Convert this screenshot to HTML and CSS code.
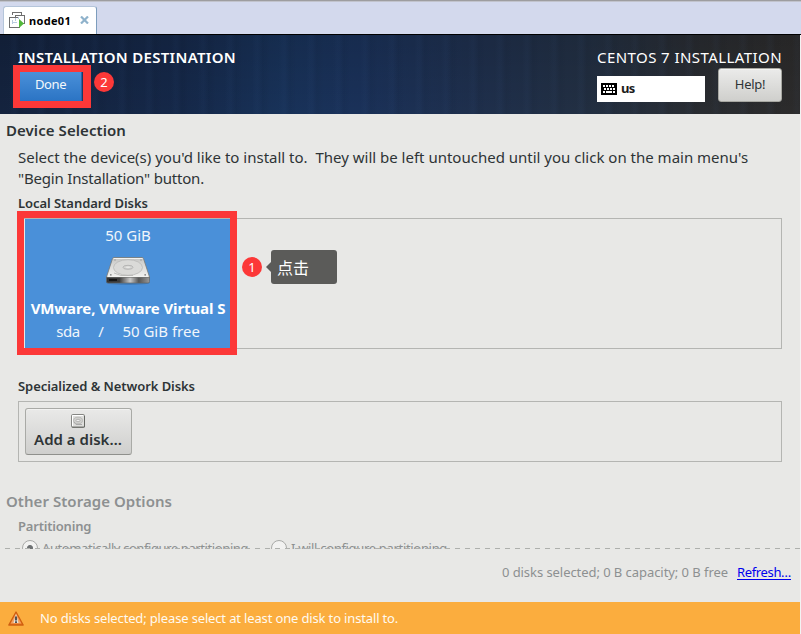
FILE: index.html
```
<!DOCTYPE html>
<html lang="en">
<head>
<meta charset="utf-8">
<title>node01</title>
<link rel="stylesheet" href="styles.css">
</head>
<body>
<div class="window">
  <nav class="tabs">
    <div class="tab">
      <svg class="tab-icon" width="17" height="17" viewBox="0 0 17 17" fill="none">
        <g stroke="#6f6f6f" shape-rendering="crispEdges">
          <path d="M3.5 3V.5h9V3.500"/>
          <path d="M6.500 6V3.500h9v8h-2"/>
          <path d="M9 5.500H.5v10h9.500v-2"/>
        </g>
        <path d="M3.500 7.500v4M3 10.500h5M6.500 6v2.500M9.500 5v2" stroke="#b9cbe0" shape-rendering="crispEdges"/>
        <path d="M10 7l5 4.500L10 16z" fill="#53b83b"/>
      </svg>
      <span class="tab-name">node01</span>
      <svg width="9" height="8" viewBox="0 0 9 8"><path d="M1 0.500l7 7M8 0.500l-7 7" stroke="#8fb2cb" stroke-width="2.200"/></svg>
    </div>
  </nav>

  <header class="header">
    <div class="header-left">
      <h1 class="page-title">INSTALLATION DESTINATION</h1>
      <button class="done">Done</button>
      <span class="badge badge-two">2</span>
    </div>
    <div class="header-right">
      <div class="product">CENTOS 7 INSTALLATION</div>
      <div class="tools">
        <div class="keyboard">
          <svg width="16" height="12" viewBox="0 0 16 12" shape-rendering="crispEdges">
            <rect width="16" height="12" fill="#000"/>
            <path d="M2 3h12M3 6h11" stroke="#fff" stroke-width="2" stroke-dasharray="2 1"/>
            <path d="M2 9h2M5 9h6M12 9h2" stroke="#fff" stroke-width="2"/>
          </svg>
          <span class="layout">us</span>
        </div>
        <button class="help">Help!</button>
      </div>
    </div>
  </header>

  <main class="content">
    <h2 class="section">Device Selection</h2>
    <p class="intro">Select the device(s) you'd like to install to.  They will be left untouched until you click on the main menu's
<span class="intro-end">"Begin Installation" button.</span></p>
    <h3 class="group">Local Standard Disks</h3>
    <div class="disks">
      <div class="disk">
        <span class="size">50 GiB</span>
        <svg class="disk-icon" width="46" height="30" viewBox="0 0 46 30">
          <defs>
            <linearGradient id="top" x1="0" y1="0" x2="0" y2="1"><stop offset="0" stop-color="#c4c4c2"/><stop offset=".5" stop-color="#dededc"/><stop offset="1" stop-color="#f1f1ef"/></linearGradient>
            <linearGradient id="front"><stop offset="0" stop-color="#333"/><stop offset=".3" stop-color="#3c3c3c"/><stop offset=".55" stop-color="#c9c9c9"/><stop offset=".75" stop-color="#555"/><stop offset="1" stop-color="#999"/></linearGradient>
          </defs>
          <ellipse cx="23" cy="26.500" rx="22" ry="2.500" fill="#174371" opacity=".25"/>
          <path d="M1.500 21l43 0v4.500q0 1.500-1.500 1.500H3q-1.500 0-1.500-1.500z" fill="url(#front)" stroke="#666" stroke-width=".7"/>
          <path d="M9 1.500h28q1 0 1.500 1L44.500 21h-43L7.500 2.500q.5-1 1.500-1z" fill="url(#top)" stroke="#777876" stroke-width=".8"/>
          <path d="M8.700 2.500h28.800M2.500 20.500h41" stroke="#f7f7f5" stroke-width=".9"/>
          <ellipse cx="23" cy="11.500" rx="14.500" ry="7.800" fill="#dadad8" stroke="#b9b9b7" stroke-width=".8"/>
          <ellipse cx="23" cy="11.300" rx="5" ry="2" fill="#d3d3d1" stroke="#a6a6a6" stroke-width=".7"/>
          <ellipse cx="23" cy="11.200" rx="2.500" ry=".8" fill="#e8e8e6"/>
          <path d="M9 17l7 2.500h12" fill="none" stroke="#b2b2b0" stroke-width=".8"/>
          <path d="M5 18.800h1.600M39.400 18.800H41M9.500 4h1M35.500 4h1" stroke="#777" stroke-width="1.200"/>
          <path d="M4 24h8" stroke="#151515" stroke-width="2"/>
        </svg>
        <strong class="model">VMware, VMware Virtual S</strong>
        <div class="details"><span class="device">sda</span><span>/</span><span>50 GiB free</span></div>
      </div>
      <div class="marker" aria-hidden="true"></div>
      <span class="badge badge-one">1</span>
      <div class="tip">点击</div>
    </div>

    <h3 class="group group-network">Specialized &amp; Network Disks</h3>
    <div class="network">
      <button class="add">
        <svg width="14" height="14" viewBox="0 0 14 14">
          <rect x=".5" y=".5" width="13" height="13" rx="1.200" fill="#dededc" stroke="#858683"/>
          <path d="M1.500 12V1.500H12" fill="none" stroke="#fff"/>
          <path d="M1 13h12.500V2" fill="none" stroke="#5d5f5b" stroke-width=".8"/>
          <ellipse cx="7" cy="6.500" rx="4.500" ry="3.300" fill="#cfcfcd" stroke="#b2b2b0" stroke-width=".8"/>
          <ellipse cx="7" cy="6.500" rx="2" ry="1.200" fill="#eee" stroke="#a0a09e" stroke-width=".7"/>
          <path d="M3 8l2 2.500h6" fill="none" stroke="#aaa"/>
        </svg>
        <span>Add a disk…</span>
      </button>
    </div>

    <h2 class="section section-other">Other Storage Options</h2>
    <h3 class="group group-partitioning">Partitioning</h3>
    <div class="choices">
      <label class="choice choice-auto"><i class="radio radio-on"></i><span>Automatically configure partitioning</span></label>
      <label class="choice choice-manual"><i class="radio"></i><span>I will configure partitioning</span></label>
      <svg class="cut" width="800" height="1"><path d="M5 .5h795" stroke="#aeb0ad" stroke-dasharray="5 5"/></svg>
    </div>
  </main>

  <div class="summary">
    <span class="totals">0 disks selected; 0 B capacity; 0 B free</span>
    <a class="refresh" href="#">Refresh…</a>
  </div>

  <footer class="warning">
    <svg width="16" height="15" viewBox="0 0 16 15">
      <path d="M8 1L15.200 14H.8z" fill="#e8731d" stroke="#cf5f10" stroke-width="1.300" stroke-linejoin="round"/>
      <path d="M8 2.500l5.300 10H2.700z" fill="#f3a465"/>
      <path d="M8 3l2.500 9h-5z" fill="#e5e5e0"/>
      <path d="M8 5.500v4M8 10.300v1.700" stroke="#222" stroke-width="1.500"/>
    </svg>
    <span class="message">No disks selected; please select at least one disk to install to.</span>
  </footer>
</div>
</body>
</html>
```
FILE: styles.css
```
* { box-sizing: border-box; }

body {
  margin: 0;
  background: #f3f3f3;
  font: 15px/20px "Noto Sans", "Noto Sans CJK SC", sans-serif;
  color: #2e3436;
}

h1, h2, h3, p { margin: 0; font-size: inherit; }
button { font: inherit; padding: 0; }
svg { display: block; flex: none; }

.window {
  width: 800px;
  height: 634px;
  display: flex;
  flex-direction: column;
  background: #e8e8e6;
}

.tabs {
  height: 35px;
  padding: 6px 3px 0;
  border-bottom: 1px solid #000;
  background: #d3d9ed;
  box-shadow: inset 0 1px #9d9d9f, inset 0 2px #c1c3cc;
  width: 801px;
}

.tab {
  width: 94px;
  height: 28px;
  padding-left: 6px;
  display: flex;
  align-items: center;
  background: #fff;
  border: 1px solid #b5c5da;
  border-right-color: #7d9dbd;
  border-bottom: 0;
  border-radius: 3px 3px 0 0;
}

.tab-icon { margin-left: -1px; }

.tab-name {
  width: 51px;
  margin-left: 3px;
  font-weight: 700;
  font-size: 11px;
  letter-spacing: .31px;
  color: #000;
}

.tab-name + svg { margin-top: -1px; }

.header {
  height: 79px;
  padding: 12px 18px 0;
  display: flex;
  justify-content: space-between;
  color: #fff;
  background:
    repeating-linear-gradient(90deg, rgba(70, 110, 170, 0) 0 9px, rgba(70, 110, 170, .04) 13px 15px, rgba(0, 0, 0, .04) 20px, rgba(70, 110, 170, 0) 27px),
    linear-gradient(180deg, rgba(0, 0, 0, .12), rgba(0, 0, 0, 0)),
    linear-gradient(90deg, #14233e 0, #152849 180px, #183259 280px, #1a3159 360px, #1e2f4d 470px, #222f42 590px, #292c31 700px, #2c2b2b 800px);
}

.header-left { position: relative; }

.page-title {
  font-weight: 600;
  letter-spacing: .3px;
}

.done {
  display: block;
  width: 78px;
  height: 43px;
  margin: -2px 0 0 -5px;
  padding: 0 2px 5px 0;
  border: 7px solid #fc3838;
  border-right-width: 8px;
  background: linear-gradient(#4a90d9, #2b74c4);
  box-shadow: inset -1px 0 #173a69, inset -2px 0 #2a63a5;
  color: #f4f8fc;
  font-size: 13px;
  line-height: 24px;
  letter-spacing: -.4px;
}

.badge {
  position: absolute;
  width: 20px;
  height: 20px;
  border-radius: 50%;
  background: #fc3838;
  color: #fff;
  font-size: 13px;
  line-height: 20px;
  text-align: center;
}

.badge-two { left: 76px; top: 25px; }
.badge-one { left: 223px; top: 38px; }

.header-right { width: 185px; }

.product {
  letter-spacing: .43px;
  white-space: nowrap;
}

.tools {
  margin-top: 1px;
  display: flex;
  justify-content: space-between;
}

.keyboard {
  width: 108px;
  height: 26px;
  margin-top: 8px;
  padding-left: 4px;
  display: flex;
  align-items: center;
  gap: 4px;
  background: #fff;
}

.layout {
  margin-top: -2px;
  color: #1c1c1c;
  font-weight: 700;
  font-size: 13px;
  letter-spacing: -.6px;
}

.help {
  width: 64px;
  height: 34px;
  padding-bottom: 2px;
  border: 1px solid #a8a8a2;
  border-radius: 3px;
  background: linear-gradient(#ebebea, #cfcfcc);
  box-shadow: inset 0 1px #f4f4f3;
  color: #2e3436;
  font-size: 13px;
  letter-spacing: -.3px;
  line-height: 28px;
}

.content {
  height: 435px;
  padding: 6px 18px 0;
  overflow: hidden;
}

.section {
  margin-left: -12px;
  font-weight: 600;
  letter-spacing: .07px;
}

.intro {
  margin-top: 7px;
  line-height: 21px;
  white-space: pre;
}

.intro-end { letter-spacing: -.19px; }

.group {
  margin-top: 4px;
  font-weight: 600;
  font-size: 13px;
  letter-spacing: -.05px;
}

.disks {
  position: relative;
  height: 131px;
  margin-top: 5px;
  padding-left: 6px;
  border: 1px solid #b4b5b2;
}

.disk {
  width: 206px;
  height: 129px;
  padding-top: 6px;
  display: flex;
  flex-direction: column;
  align-items: center;
  background: #4a90d9;
  color: #f1f6fb;
}

.disk-icon { margin-top: 11px; }

.model {
  margin-top: 12px;
  letter-spacing: -.1px;
  color: #fff;
  white-space: nowrap;
}

.details {
  margin-top: 3px;
  display: flex;
  gap: 18.500px;
}

.device { letter-spacing: -.4px; }

/* Highlight frame drawn over the selected disk */
.marker {
  position: absolute;
  left: -2px;
  top: -8px;
  width: 220px;
  height: 144px;
  border: 7px solid #fc3838;
}

.tip {
  position: absolute;
  left: 252px;
  top: 31px;
  width: 66px;
  height: 34px;
  padding-left: 6px;
  border-radius: 3px;
  background: #5b5b59;
  color: #fff;
  font: 16px/34px "Noto Sans CJK SC", sans-serif;
}

.tip::before {
  content: "";
  position: absolute;
  left: -5px;
  top: 12px;
  border: 5px solid transparent;
  border-left: 0;
  border-right-color: #5b5b59;
}

.group-network {
  margin-top: 27px;
  letter-spacing: -.07px;
}

.network {
  height: 61px;
  margin-top: 5px;
  padding: 6px;
  border: 1px solid #b4b5b2;
}

.add {
  width: 107px;
  height: 47px;
  padding: 5px 1px 0 0;
  display: flex;
  flex-direction: column;
  align-items: center;
  border: 1px solid #a9aaa6;
  border-bottom-color: #8f908c;
  border-radius: 3px;
  background: linear-gradient(#e9e9e8, #cfcfcd);
  box-shadow: inset 0 1px #f2f2f1;
  color: #2e3436;
  font-weight: 600;
  line-height: 20px;
}

.add span { margin-top: 1px; }

.section-other {
  margin-top: 29px;
  letter-spacing: .045px;
  color: #8d9091;
}

.group-partitioning {
  margin-top: 5px;
  letter-spacing: -.2px;
  color: #8d9091;
}

.choices {
  position: relative;
  height: 20px;
  margin-top: 2px;
  display: flex;
  color: #8d9091;
  font-size: 13px;
}

.choice {
  display: flex;
  align-items: center;
  white-space: nowrap;
}

.choice-auto { width: 249px; padding-left: 4px; letter-spacing: -.4px; }
.choice-manual { padding-left: 4px; letter-spacing: -.32px; }

.radio {
  width: 16px;
  height: 16px;
  margin: 0 4px 0 0;
  border: 1px solid #a9aaa8;
  border-radius: 50%;
  background: #f2f2f1;
}

.radio-on { background: radial-gradient(circle, #6e7173 2.500px, #f2f2f1 3.500px); }

.cut {
  position: absolute;
  left: -18px;
  top: 10px;
}

.summary {
  height: 53px;
  padding: 13px 9px 0 0;
  display: flex;
  justify-content: flex-end;
  gap: 9px;
  font-size: 13px;
}

.totals { letter-spacing: -.06px; color: #8d9091; }
.refresh { letter-spacing: -.36px; color: #0000ee; text-underline-offset: 2px; }

.warning {
  height: 32px;
  padding: 0 8px;
  display: flex;
  align-items: center;
  gap: 16px;
  background: #fbad3e;
  color: #fffaf0;
  font-size: 13px;
}

.message { letter-spacing: -.15px; }
```
